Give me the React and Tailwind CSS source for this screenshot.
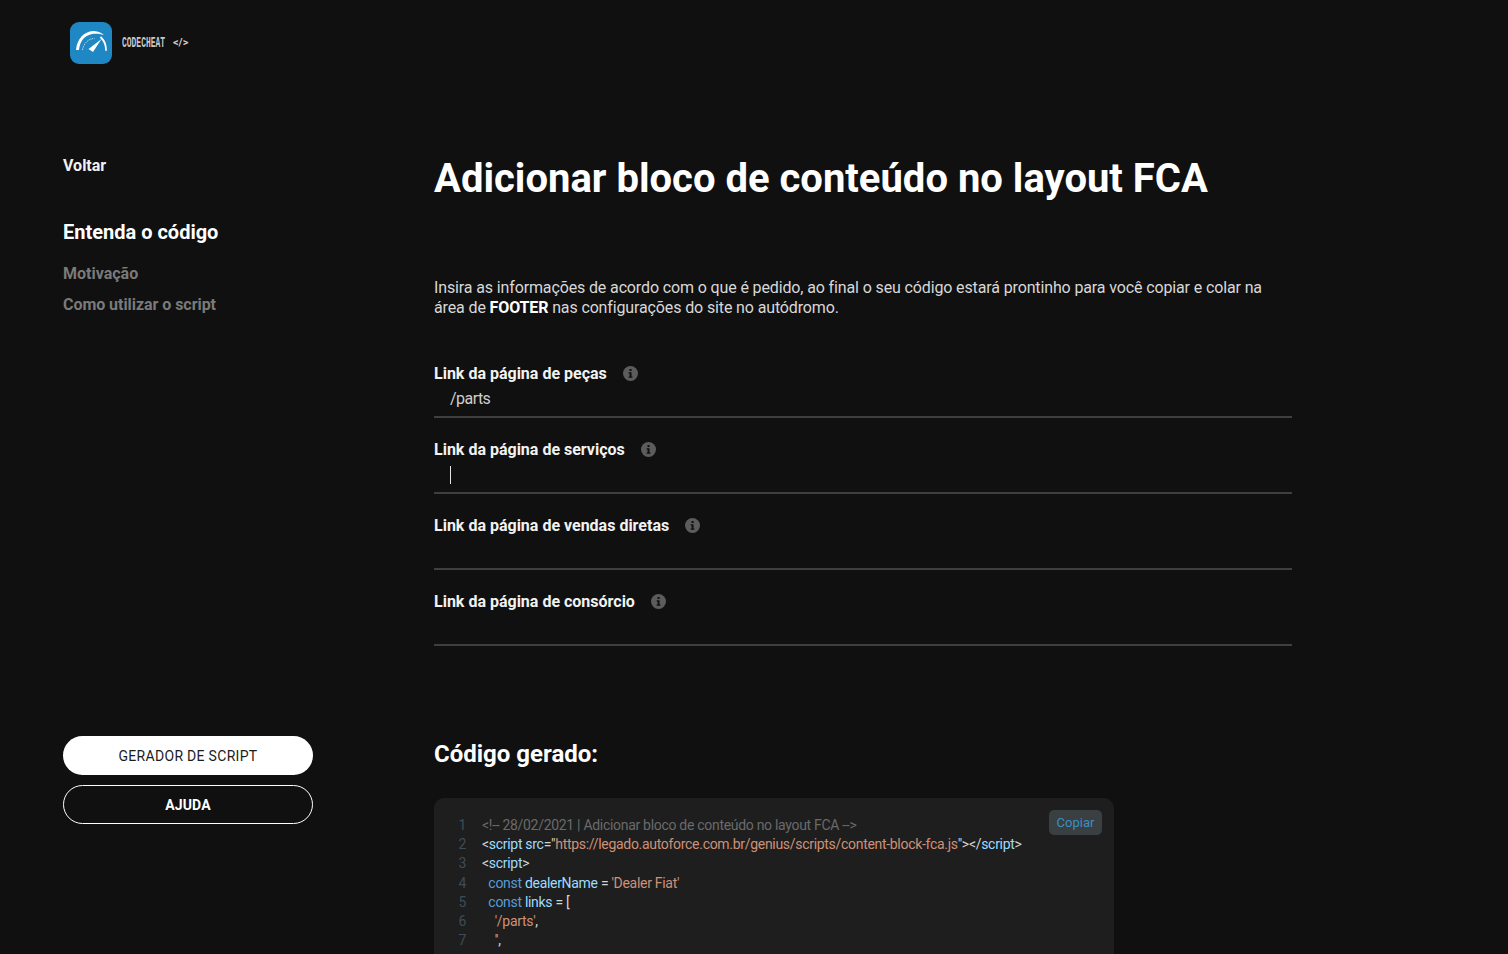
import React from 'react';

const InfoIcon = () => (
  <svg className="w-[15px] h-[15px] -mt-[1px]" viewBox="0 0 16 16">
    <circle cx="8" cy="8" r="8" fill="#5c5c5c" />
    <rect x="6.9" y="3.2" width="2.3" height="2.2" rx="0.6" fill="#101010" />
    <path d="M6 6.7h3.1v4.5H10.1v1.3H6v-1.3h1V8H6z" fill="#101010" />
  </svg>
);

const Field = ({ label, value, caret }) => (
  <div className="h-[76px] border-b-2 border-[#3f3f3f] pt-[22px]">
    <div className="flex items-center gap-4 h-[20px] text-[16px] leading-5 font-bold text-[#f2f2f2]">
      <span>{label}</span>
      <InfoIcon />
    </div>
    <div className="h-[30px] pl-4 flex items-center text-[16px] text-[#cfcfcf] tracking-[-0.55px]">
      {value}
      {caret && <span className="block w-px h-[18px] bg-[#e5e5e5]" />}
    </div>
  </div>
);

const K = ({ children }) => <span className="text-[#569cd6]">{children}</span>;
const N = ({ children }) => <span className="text-[#9cdcfe]">{children}</span>;
const S = ({ children }) => <span className="text-[#ce9178]">{children}</span>;

const codeLines = [
  <span className="text-[#6a6a6a]">{'<!-- 28/02/2021 | Adicionar bloco de conteúdo no layout FCA -->'}</span>,
  <>{'<'}<N>script</N> <N>src</N>={'"'}<S>https://legado.autoforce.com.br/genius/scripts/content-block-fca.js</S>{'"></'}<N>script</N>{'>'}</>,
  <>{'<'}<N>script</N>{'>'}</>,
  <>{'  '}<K>const</K> <N>dealerName</N> = <S>'Dealer Fiat'</S></>,
  <>{'  '}<K>const</K> <N>links</N> = [</>,
  <>{'    '}<S>'/parts'</S>,</>,
  <>{'    '}<S>''</S>,</>,
];

export default function App() {
  return (
    <div className="h-[954px] overflow-hidden bg-[#101010] flex font-['Roboto',sans-serif] text-white">
      {/* Sidebar */}
      <aside className="w-[434px] shrink-0 flex flex-col pl-[63px] pb-[130px]">
        <div className="flex items-center h-[42px] mt-[22px] ml-[7px]">
          <div className="w-[42px] h-[42px] rounded-[9px] bg-[#1f87c4]">
            <svg className="w-full h-full" viewBox="0 0 42 42" fill="none">
              <path d="M6 28C7 17 14 9.500 23 9c4 0 8 1.500 11 4-3.500-1-7-1.500-10-1.200C16 12.500 10 18 9 28z" fill="#fff" />
              <path d="M12.500 28c1-6.500 6-11.500 12-11.500" stroke="#fff" strokeOpacity="0.7" strokeWidth="1" strokeDasharray="1.500 1" />
              <path d="M31 15.500c3 3 5 7.500 5 12.500" stroke="#fff" strokeWidth="1.800" strokeLinecap="round" />
              <path d="M18.500 27L31.500 17 23 30z" fill="#fff" />
            </svg>
          </div>
          <span className="ml-[10px] w-[43px] text-[14px] leading-none font-['Liberation_Mono',monospace] font-bold text-[#c8c8c8] whitespace-nowrap scale-x-[0.57] origin-left">CODECHEAT</span>
          <span className="ml-[8px] text-[11px] font-bold text-[#c8c8c8]">{'</>'}</span>
        </div>

        <a className="mt-[92px] text-[16px] leading-5 font-bold text-[#f2f2f2]">Voltar</a>
        <h2 className="mt-[44px] text-[20px] leading-6 font-bold">Entenda o código</h2>
        <a className="mt-[20px] text-[16px] leading-5 font-bold text-[#7a7a7a]">Motivação</a>
        <a className="mt-[11px] text-[16px] leading-5 font-bold text-[#7a7a7a] tracking-[-0.05px]">Como utilizar o script</a>

        <div className="mt-auto w-[250px] flex flex-col gap-[10px]">
          <button className="h-[39px] pt-[1px] rounded-full bg-white text-[#1c1c1c] text-[14px] tracking-[0.3px]">GERADOR DE SCRIPT</button>
          <button className="h-[39px] pt-[1px] rounded-full border border-white bg-transparent text-white text-[14px] font-bold tracking-[0.1px]">AJUDA</button>
        </div>
      </aside>

      {/* Conteudo */}
      <main className="w-[858px] shrink-0 pt-[154px]">
        <h1 className="text-[40px] leading-[50px] font-bold whitespace-nowrap">Adicionar bloco de conteúdo no layout FCA</h1>
        <p className="mt-[74px] w-[840px] text-[16px] leading-5 text-[#d8d8d8] tracking-[-0.13px]">
          Insira as informações de acordo com o que é pedido, ao final o seu código estará prontinho para você copiar e colar na área de <strong className="font-bold text-white">FOOTER</strong> nas configurações do site no autódromo.
        </p>

        <div className="mt-[24px]">
          <Field label="Link da página de peças" value="/parts" />
          <Field label="Link da página de serviços" caret />
          <Field label="Link da página de vendas diretas" />
          <Field label="Link da página de consórcio" />
        </div>

        <h2 className="mt-[92px] text-[24px] leading-8 font-bold">Código gerado:</h2>

        <div className="relative mt-[28px] w-[680px] h-[200px] rounded-[10px] bg-[#1e1e1e] pt-[18px] pl-[8px] flex text-[14px] leading-[19.2px] tracking-[-0.3px]">
          <div className="w-[24px] mr-[16px] text-right text-[#3d4d57]">
            {codeLines.map((_, i) => <div key={i}>{i + 1}</div>)}
          </div>
          <div className="text-[#d4d4d4] whitespace-pre">
            {codeLines.map((line, i) => <div key={i}>{line}</div>)}
          </div>
          <button className="absolute top-[12px] right-[12px] w-[53px] h-[25px] rounded-[5px] bg-[#3a3f42] text-[#3a8fc2] text-[13px] tracking-normal">Copiar</button>
        </div>
      </main>
    </div>
  );
}
